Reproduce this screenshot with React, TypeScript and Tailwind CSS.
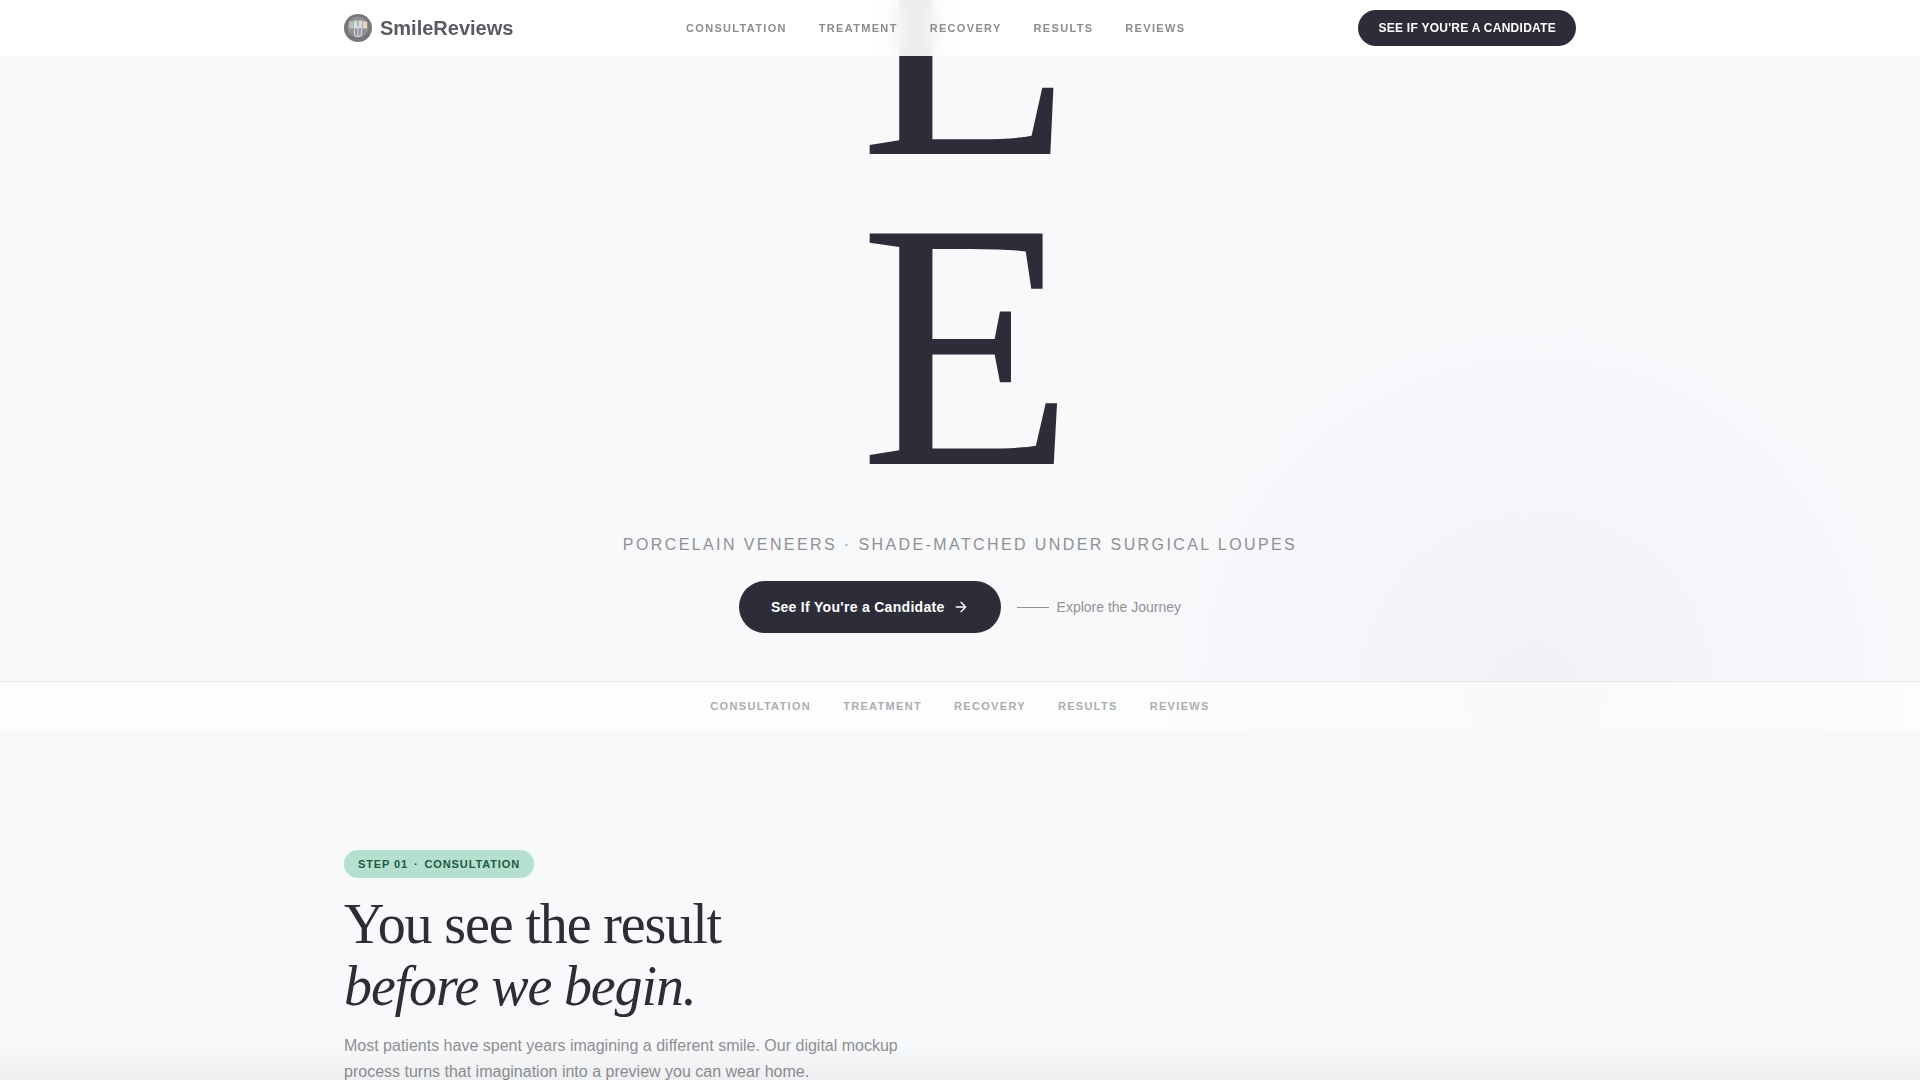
const steps = ['Consultation', 'Treatment', 'Recovery', 'Results', 'Reviews'];

function Logo() {
  return (
    <svg width="28" height="28" viewBox="0 0 28 28" className="shrink-0">
      <circle cx="14" cy="14" r="14" fill="#77777b" />
      <circle cx="14" cy="13" r="10.5" fill="#8f9094" />
      <rect x="5" y="7.5" width="4" height="7" fill="#b4bfc6" />
      <rect x="9.5" y="6.5" width="4" height="8" fill="#cfe2d4" />
      <rect x="14.5" y="6.5" width="4" height="8" fill="#d9d6e6" />
      <rect x="19" y="7.5" width="4" height="7" fill="#ddd9b9" />
      <path d="M14 12v11M10.5 15v4.5c0 2 1.500 3 3.500 3s3.500-1 3.500-3V15" stroke="#dcdcde" strokeWidth="1.100" fill="none" />
    </svg>
  );
}

function SiteHeader() {
  return (
    <header className="absolute top-0 left-0 right-0 z-20 h-14 bg-white/90 backdrop-blur-md">
      <div className="max-w-[1280px] mx-auto px-6 h-full grid grid-cols-[342px_1fr_auto] items-center">
        <div className="flex items-center gap-2">
          <Logo />
          <span className="text-[20px] font-bold text-[#5a5a60]">SmileReviews</span>
        </div>
        <nav className="flex items-center gap-8">
          {steps.map(s => (
            <a key={s} className="text-[11px] font-bold uppercase tracking-[0.12em] text-[#8c8c90]">{s}</a>
          ))}
        </nav>
        <button className="h-9 px-5 rounded-full bg-[#2d2d3a] text-white text-xs font-bold uppercase tracking-[0.27px]">
          See If You're a Candidate
        </button>
      </div>
    </header>
  );
}

function Hero() {
  return (
    <section className="relative h-[730px] overflow-hidden flex flex-col items-center justify-end">
      {/* soft tint behind the lower right of the hero */}
      <div className="absolute right-[-15px] top-[290px] w-[800px] h-[800px] bg-[radial-gradient(circle,#f2f1f8_0%,transparent_70%)]" />
      <h1 className="relative shrink-0 flex flex-col items-center font-['Liberation_Serif',serif] text-[352px] leading-[310px] tracking-[-0.04em] text-[#2d2d3a] font-normal">
        {'SMILE'.split('').map((c, i) => (
          <span key={i}>{c}</span>
        ))}
      </h1>
      <p className="relative shrink-0 mt-[33px] text-base uppercase tracking-[0.15em] text-[#909094]">
        Porcelain Veneers · Shade-Matched Under Surgical Loupes
      </p>
      <div className="relative shrink-0 mt-6 flex items-center gap-4">
        <button className="h-[52px] px-8 rounded-full bg-[#2d2d3a] text-white text-sm font-bold tracking-[0.3px] flex items-center gap-2">
          See If You're a Candidate
          <svg width="16" height="16" viewBox="0 0 24 24" fill="none" stroke="currentColor" strokeWidth="2" strokeLinecap="round" strokeLinejoin="round">
            <path d="M5 12h14M12 5l7 7-7 7" />
          </svg>
        </button>
        <span className="flex items-center gap-2 text-sm text-[#929296]">
          <span className="w-8 h-px bg-[#929296]" />
          Explore the Journey
        </span>
      </div>

      {/* Section nav */}
      <div className="relative shrink-0 mt-12 w-full h-[49px] border-t border-[#e7e7ea] bg-white/60 flex items-center justify-center gap-8">
        {steps.map(s => (
          <a key={s} className="text-[11px] font-bold uppercase tracking-[0.12em] text-[#adadb1]">{s}</a>
        ))}
      </div>
    </section>
  );
}

export default function App() {
  return (
    <div className="relative h-screen overflow-hidden bg-[#f8f9fb] font-['Liberation_Sans',Arial,sans-serif]">
      <SiteHeader />
      <Hero />

      <section className="max-w-[1280px] mx-auto px-6 pt-[120px]">
        <span className="inline-flex items-center h-7 px-3.5 rounded-full bg-[#b5dfcf] text-[11px] font-bold uppercase tracking-[0.08em] text-[#1c5a45]">
          Step 01<span className="mx-1.5">·</span>Consultation
        </span>
        <h2 className="mt-[15px] font-['Liberation_Serif',serif] text-[56px] leading-[62px] tracking-[-0.02em] text-[#2c2d35] font-normal">
          You see the result
          <br />
          <em>before we begin.</em>
        </h2>
        <p className="mt-4 w-[580px] text-base leading-[26px] text-[#8f8f93]">
          Most patients have spent years imagining a different smile. Our digital mockup process turns that imagination into a preview you can wear home.
        </p>
      </section>

      <div className="absolute left-0 right-0 bottom-0 h-10 bg-gradient-to-t from-black/[0.04] to-transparent" />
    </div>
  );
}
